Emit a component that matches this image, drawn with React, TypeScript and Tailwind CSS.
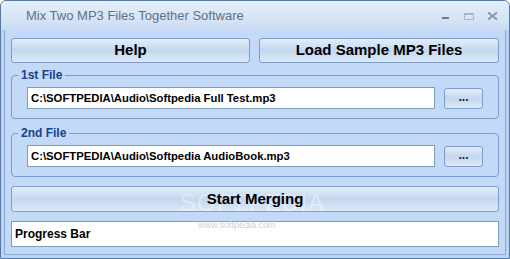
import React from "react";

const btn =
  "flex items-center justify-center rounded-[3px] border border-[#7f9ccb] bg-gradient-to-b from-[#e4edf9] via-[#c4d7ef] to-[#dce9f9] font-bold text-black";

function Group({ label, path }: { label: string; path: string }) {
  return (
    <div className="relative h-[44px] rounded-[4px] border border-[#7b9bc9]">
      <span className="absolute left-[6px] top-[-9px] bg-[#c2d9f7] px-[3px] text-[12px] font-bold leading-[16px] text-[#15428b]">
        {label}
      </span>
      <div className="flex items-center pl-[15px] pt-[11px]">
        <div className="flex h-[22px] w-[408px] items-center border border-[#7f9db9] bg-white pl-[3px] text-[11.3px] font-bold text-black">
          {path}
        </div>
        <div className={`${btn} ml-[9px] h-[21px] w-[39px] text-[12px] leading-none`}>
          <span className="mt-[-3px] text-[#101830]">...</span>
        </div>
      </div>
    </div>
  );
}

export default function App() {
  return (
    <div
      className="relative flex h-[259px] w-[510px] flex-col overflow-hidden rounded-t-[6px] border border-[#5977a3] bg-[#bcd4f2]"
      style={{ fontFamily: '"Liberation Sans", Arial, sans-serif' }}
    >
      <div className="relative flex h-[29px] shrink-0 items-center bg-gradient-to-b from-[#e6effa] to-[#cbdcf2] pl-[25px]">
        <span className="text-[13px] text-[#5f6f8a]">Mix Two MP3 Files Together Software</span>
        <div className="absolute left-[441px] top-[16px] h-[2px] w-[7px] bg-[#6d7d93]" />
        <div className="absolute left-[463px] top-[12px] h-[7px] w-[10px] border border-t-[2px] border-[#a6b6cc]" />
        <svg width="11" height="8" viewBox="0 0 11 8" className="absolute left-[486px] top-[11px]">
          <path d="M1 0.5 L10 7.5 M10 0.5 L1 7.5" stroke="#8597b1" strokeWidth="2" />
        </svg>
      </div>
      <div className="mx-[3px] mb-[3px] flex flex-1 flex-col border border-t-0 border-[#8aa8d2] bg-[#c2d9f7] px-[6px] pt-[8px]">
        <div className="flex gap-[9px]">
          <div className={`${btn} h-[25px] w-[239px] text-[15px]`}>Help</div>
          <div className={`${btn} h-[25px] w-[240px] text-[15px]`}>Load Sample MP3 Files</div>
        </div>
        <div className="mt-[12px]">
          <Group label="1st File" path="C:\SOFTPEDIA\Audio\Softpedia Full Test.mp3" />
        </div>
        <div className="mt-[14px]">
          <Group label="2nd File" path="C:\SOFTPEDIA\Audio\Softpedia AudioBook.mp3" />
        </div>
        <div className={`${btn} relative mt-[9px] h-[26px] text-[15px]`}>
          <span className="absolute left-[168px] top-[-2px] text-[24px] font-normal tracking-[1px] text-white/40">SOFTPEDIA</span>
          <span className="relative">Start Merging</span>
        </div>
        <div className="relative mt-[9px] flex h-[26px] items-center border border-[#7f9db9] bg-white pl-[3px] text-[12px] font-bold text-black">
          Progress Bar
          <span className="absolute left-[186px] top-[-3px] text-[9px] font-normal text-[#c8d0dc]">www.softpedia.com</span>
        </div>
      </div>
    </div>
  );
}
